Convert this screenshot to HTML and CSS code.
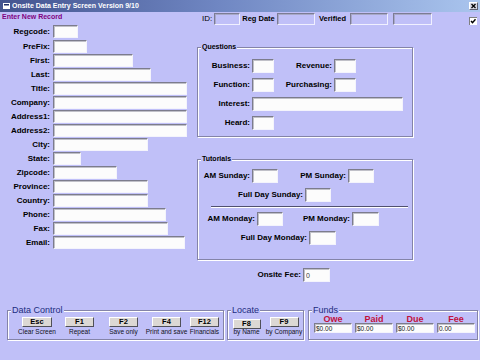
FILE: index.html
```html
<!DOCTYPE html>
<html lang="en">

<head>
  <meta charset="utf-8">
  <title>Onsite Data Entry Screen</title>

  <link rel="stylesheet" href="styles.css">
</head>

<body>
  <div class="window">

    <div class="titlebar">
      <svg class="app-icon" width="7" height="6" viewBox="0 0 7 6">
        <rect x="0.5" y="0.5" width="6" height="5" fill="#ffffff" stroke="#ffffff"/>
        <rect x="1" y="1" width="5" height="1.5" fill="#20306a"/>
      </svg>
      <span class="title">Onsite Data Entry Screen Version 9/10</span>
      <span class="close">
        <svg width="7" height="6" viewBox="0 0 7 6">
          <path d="M1.5 1 L5.5 5 M5.5 1 L1.5 5" stroke="#000" stroke-width="1.3"/>
        </svg>
      </span>
    </div>

    <div class="toprow">
      <div class="mode">Enter New Record</div>
      <div class="keys">
        <span class="key-label key-id">ID:</span>
        <span class="box w26"></span>
        <span class="key-label key-date">Reg Date</span>
        <span class="box w38"></span>
        <span class="key-label key-ver">Verified</span>
        <span class="box w38"></span>
        <span class="box box-last w39"></span>
      </div>
      <svg class="check" width="8" height="8" viewBox="0 0 8 8">
        <rect x="0" y="0" width="8" height="8" fill="#808080"/>
        <rect x="1" y="1" width="7" height="7" fill="#ffffff"/>
        <path d="M2 4 L3.5 5.6 L6.5 2.2" fill="none" stroke="#000" stroke-width="1.4"/>
      </svg>
    </div>

    <div class="content">
      <div class="person">
        <label>Regcode:</label><input class="tb w25" type="text">
        <label>PreFix:</label><input class="tb w34" type="text">
        <label>First:</label><input class="tb w80" type="text">
        <label>Last:</label><input class="tb w98" type="text">
        <label>Title:</label><input class="tb w134" type="text">
        <label>Company:</label><input class="tb w134" type="text">
        <label>Address1:</label><input class="tb w134" type="text">
        <label>Address2:</label><input class="tb w134" type="text">
        <label>City:</label><input class="tb w95" type="text">
        <label>State:</label><input class="tb w28" type="text">
        <label>Zipcode:</label><input class="tb w64" type="text">
        <label>Province:</label><input class="tb w95" type="text">
        <label>Country:</label><input class="tb w95" type="text">
        <label>Phone:</label><input class="tb w113" type="text">
        <label>Fax:</label><input class="tb w115" type="text">
        <label>Email:</label><input class="tb w132" type="text">
      </div>

      <div class="side">
        <fieldset class="group questions">
          <legend>Questions</legend>
          <div class="qgrid">
            <label>Business:</label><input class="tb q" type="text">
            <label>Revenue:</label><input class="tb q" type="text">
            <label>Function:</label><input class="tb q" type="text">
            <label>Purchasing:</label><input class="tb q" type="text">
            <label>Interest:</label><input class="tb q-wide" type="text">
            <label>Heard:</label><input class="tb q" type="text">
          </div>
        </fieldset>

        <fieldset class="group tutorials">
          <legend>Tutorials</legend>
          <div class="trow">
            <label class="tl w52">AM Sunday:</label><input class="tb t w26" type="text">
            <label class="tl w68">PM Sunday:</label><input class="tb t w26" type="text">
          </div>
          <div class="trow">
            <label class="tl w105">Full Day Sunday:</label><input class="tb t w26" type="text">
          </div>
          <div class="sep"></div>
          <div class="trow">
            <label class="tl w57">AM Monday:</label><input class="tb t w26" type="text">
            <label class="tl w67">PM Monday:</label><input class="tb t w27" type="text">
          </div>
          <div class="trow">
            <label class="tl w109">Full Day Monday:</label><input class="tb t w27" type="text">
          </div>
        </fieldset>

        <div class="onsite">
          <label class="tl w104">Onsite Fee:</label><input class="tb t w27" type="text" value="0">
        </div>
      </div>
    </div>

    <div class="bottom">
      <fieldset class="group panel data-control">
        <legend>Data Control</legend>
        <div class="fkeys dc-keys">
          <div class="fkey c42"><span class="btn w30">Esc</span><span class="cap">Clear Screen</span></div>
          <div class="fkey c43"><span class="btn">F1</span><span class="cap">Repeat</span></div>
          <div class="fkey c45"><span class="btn">F2</span><span class="cap">Save only</span></div>
          <div class="fkey c41"><span class="btn">F4</span><span class="cap">Print and save</span></div>
          <div class="fkey c35"><span class="btn">F12</span><span class="cap">Financials</span></div>
        </div>
      </fieldset>

      <fieldset class="group panel locate">
        <legend>Locate</legend>
        <div class="fkeys">
          <div class="fkey c37"><span class="btn btn-low w28">F8</span><span class="cap cap-low">by Name</span></div>
          <div class="fkey c38"><span class="btn">F9</span><span class="cap">by Company</span></div>
        </div>
      </fieldset>

      <fieldset class="group panel funds">
        <legend>Funds</legend>
        <div class="funds-row">
          <div class="fcol"><span class="fh">Owe</span><input class="tb fin" type="text" value="$0.00"></div>
          <div class="fcol"><span class="fh">Paid</span><input class="tb fin" type="text" value="$0.00"></div>
          <div class="fcol"><span class="fh">Due</span><input class="tb fin" type="text" value="$0.00"></div>
          <div class="fcol"><span class="fh">Fee</span><input class="tb fin" type="text" value="0.00"></div>
        </div>
      </fieldset>
    </div>

  </div>
</body>

</html>
```

FILE: styles.css
```css
* {
	box-sizing: border-box;
}

body {
	margin: 0;
	background: #c0c0f8;
	font-family: "Liberation Sans", Arial, sans-serif;
	font-size: 8px;
	color: #000;
}

.window {
	width: 480px;
	height: 360px;
	overflow: hidden;
}

/* title bar */
.titlebar {
	height: 12px;
	display: flex;
	align-items: center;
	background: linear-gradient(to right, #43548f, #6f86c2 45%, #aac5ee);
	color: #fff;
	font-size: 7px;
	font-weight: bold;
}

.app-icon {
	margin: 0 2px 0 3px;
	flex: none;
}

.title {
	flex: 1;
	line-height: 10px;
}

.close {
	width: 9px;
	height: 8px;
	margin-right: 2px;
	display: flex;
	align-items: center;
	justify-content: center;
	background: #d8d8e4;
	border: 1px solid;
	border-color: #ffffff #606070 #606070 #ffffff;
}

/* top row */
.toprow {
	height: 13px;
	display: flex;
}

.mode {
	width: 202px;
	padding-left: 2px;
	color: #800080;
	font-size: 7px;
	font-weight: bold;
	line-height: 8px;
	padding-top: 1px;
}

.keys {
	display: flex;
}

.key-label {
	line-height: 10px;
	padding-top: 2px;
	font-size: 7.5px;
	font-weight: bold;
}

.key-id {
	width: 12px;
	font-size: 8px;
	font-weight: normal;
}

.key-date {
	width: 37px;
	text-align: center;
}

.key-ver {
	width: 35px;
	text-align: center;
}

.box {
	height: 12px;
	margin-top: 1px;
	border: 1px solid;
	border-color: #7c7c94 #f0f0ff #f0f0ff #7c7c94;
	box-shadow: inset 1px 1px #a8a8c8;
}

.box-last {
	margin-left: 5px;
}

.check {
	margin: 5px 3px 0 auto;
}

/* inputs */
.tb {
	display: block;
	height: 13px;
	margin: 0;
	padding: 0 2px;
	border: 1px solid;
	border-color: #7c7c8c #f4f4fc #f4f4fc #7c7c8c;
	box-shadow: inset 1px 1px #c0c0c8;
	background: #fcfcfc;
	font-family: "Liberation Sans", Arial, sans-serif;
	font-size: 7px;
	color: #404040;
	outline: none;
}

.w25 { width: 25px; }
.w26 { width: 26px; }
.w27 { width: 27px; }
.w28 { width: 28px; }
.w30 { width: 30px; }
.w34 { width: 34px; }
.w38 { width: 38px; }
.w39 { width: 39px; }
.w64 { width: 64px; }
.w80 { width: 80px; }
.w95 { width: 95px; }
.w98 { width: 98px; }
.w113 { width: 113px; }
.w115 { width: 115px; }
.w132 { width: 132px; }
.w134 { width: 134px; }

/* left form */
.content {
	display: flex;
}

.person {
	width: 197px;
	display: grid;
	grid-template-columns: 50px auto;
	grid-template-rows: 14px;
	grid-auto-rows: 13px;
	row-gap: 1px;
	column-gap: 3px;
	align-content: start;
	justify-items: start;
}

.person label {
	justify-self: end;
	font-weight: bold;
	line-height: 13px;
}

/* group boxes */
.group {
	margin: 0;
	padding: 0;
	min-inline-size: 0;
	border: 1px solid #8484a8;
	box-shadow: inset 1px 1px #ffffff, 1px 1px #ffffff;
}

.group legend {
	margin-left: 3px;
	padding: 0 1px;
	font-size: 7px;
	font-weight: bold;
	line-height: 8px;
	background: #c0c0f8;
}

.side {
	width: 216px;
}

.questions {
	width: 216px;
	margin-top: 18px;
	padding: 8px 0 6px;
}

.qgrid {
	display: grid;
	grid-template-columns: 52px 22px 56px 21px;
	grid-auto-rows: 14px;
	row-gap: 5px;
	column-gap: 2px;
	justify-items: start;
}

.qgrid label {
	justify-self: end;
	font-weight: bold;
	line-height: 14px;
}

.qgrid .q {
	height: 14px;
	width: 22px;
}

.qgrid .q-wide {
	grid-column: 2 / span 3;
	height: 14px;
	width: 151px;
}

.tutorials {
	width: 216px;
	margin-top: 18px;
	padding: 6px 0 14px;
}

.trow {
	display: flex;
	height: 14px;
}

.trow + .trow {
	margin-top: 5px;
}

.tl {
	flex: none;
	margin-right: 2px;
	text-align: right;
	font-weight: bold;
	line-height: 14px;
}

.tl.w52 { width: 52px; }
.tl.w57 { width: 57px; }
.tl.w67 { width: 67px; }
.tl.w68 { width: 68px; }
.tl.w104 { width: 104px; }
.tl.w105 { width: 105px; }
.tl.w109 { width: 109px; }

.tb.t {
	height: 14px;
	flex: none;
}

.sep {
	width: 197px;
	height: 2px;
	margin: 4px 0 4px 13px;
	border-top: 1px solid #505070;
	border-bottom: 1px solid #ffffff;
}

.onsite {
	display: flex;
	margin-top: 8px;
}

/* bottom panels */
.bottom {
	display: flex;
	margin-top: 23px;
	padding-left: 7px;
}

.panel {
	height: 35px;
	padding-top: 2px;
}

.panel legend {
	font-size: 9px;
	font-weight: normal;
	line-height: 10px;
	color: #1c2c80;
}

.data-control {
	width: 217px;
	margin-right: 3px;
}

.locate {
	width: 77px;
	margin-right: 4px;
}

.funds {
	width: 170px;
	padding-top: 0;
}

.fkeys {
	display: flex;
}

.dc-keys {
	padding-left: 8px;
}

.fkey {
	display: flex;
	flex-direction: column;
	align-items: center;
	flex: none;
}

.c35 { width: 35px; }
.c37 { width: 37px; }
.c38 { width: 38px; }
.c41 { width: 41px; }
.c42 { width: 42px; }
.c43 { width: 43px; }
.c45 { width: 45px; }

.btn {
	width: 29px;
	height: 10px;
	border: 1px solid;
	border-color: #ffffff #505058 #505058 #ffffff;
	background: #dcd8d4;
	font-weight: bold;
	font-size: 7.5px;
	line-height: 8px;
	text-align: center;
}

.btn.w28 { width: 28px; }
.btn.w30 { width: 30px; }

.btn-low {
	margin-top: 2px;
}

.cap {
	margin-top: 1px;
	font-size: 6.5px;
	line-height: 8px;
	white-space: nowrap;
	color: #101020;
}

.cap-low {
	margin-top: -1px;
}

.funds-row {
	display: flex;
	gap: 3px;
	padding-left: 5px;
}

.fcol {
	width: 38px;
	display: flex;
	flex-direction: column;
	align-items: center;
}

.fh {
	color: #c0103c;
	font-size: 9px;
	font-weight: bold;
	line-height: 8px;
}

.tb.fin {
	width: 38px;
	height: 10px;
	font-size: 6.5px;
	color: #202020;
	padding: 0 1px;
}
```
